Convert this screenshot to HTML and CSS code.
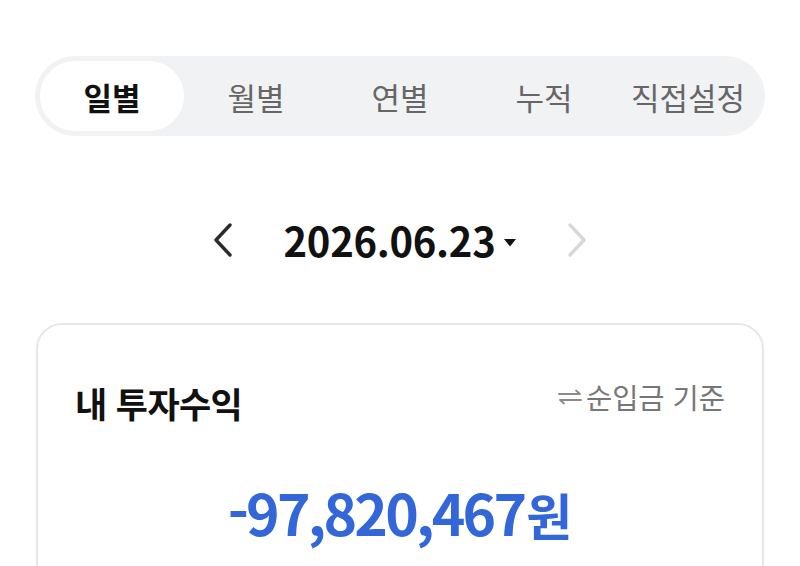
FILE: index.html
```html
<!DOCTYPE html>
<html lang="ko">
<head>
<meta charset="utf-8">
<link rel="stylesheet" href="styles.css">
</head>
<body>
<div class="page">
  <div class="tabs">
    <div class="tab active">일별</div>
    <div class="tab">월별</div>
    <div class="tab">연별</div>
    <div class="tab">누적</div>
    <div class="tab">직접설정</div>
  </div>

  <div class="date-row">
    <svg class="chev" width="22" height="36" viewBox="0 0 22 36"><polyline points="18,3 4,18 18,33" fill="none" stroke="#2b2b2b" stroke-width="3.4" stroke-linecap="round" stroke-linejoin="round"/></svg>
    <div class="date">
      <span class="date-text">2026.06.23</span>
      <svg class="caret" width="12" height="9" viewBox="0 0 12 9"><polygon points="0,1 12,1 6,8.5" fill="#111"/></svg>
    </div>
    <svg class="chev" width="22" height="36" viewBox="0 0 22 36"><polyline points="4,3 18,18 4,33" fill="none" stroke="#d8d8d8" stroke-width="3.4" stroke-linecap="round" stroke-linejoin="round"/></svg>
  </div>

  <div class="card">
    <div class="card-head">
      <div class="title">내 투자수익</div>
      <div class="basis">
        <svg class="swap" width="26" height="16" viewBox="0 0 26 16"><g fill="none" stroke="#8a8a8a" stroke-width="1.8" stroke-linecap="round" stroke-linejoin="round"><polyline points="2,5 23,5 19,1.5"/><polyline points="24,11 3,11 7,14.5"/></g></svg>
        <span>순입금 기준</span>
      </div>
    </div>
    <div class="amount"><span class="num">-97,820,467</span><span class="won">원</span></div>
  </div>
</div>
</body>
</html>
```

FILE: styles.css
```css
html, body {
  margin: 0;
  padding: 0;
  background: #ffffff;
}
body {
  font-family: "Noto Sans CJK KR", "Noto Sans", sans-serif;
  color: #111;
}
.page {
  padding: 56px 35px 0 35px;
}
.tabs {
  display: grid;
  grid-template-columns: repeat(5, 1fr);
  height: 80px;
  padding: 5px;
  box-sizing: border-box;
  background: #f1f2f4;
  border-radius: 40px;
}
.tab {
  display: flex;
  align-items: center;
  justify-content: center;
  font-size: 31px;
  color: #666;
  border-radius: 36px;
  line-height: 1;
}
.tab.active {
  background: #ffffff;
  color: #111;
  font-weight: 700;
}
.date-row {
  margin-top: 70px;
  height: 68px;
  display: flex;
  align-items: center;
  justify-content: center;
}
.date {
  display: flex;
  align-items: center;
  margin: 0 50px 0 50px;
}
.date-text {
  font-size: 40px;
  font-weight: 700;
  line-height: 1;
  color: #111;
  letter-spacing: -0.3px;
}
.caret {
  margin-left: 9px;
  margin-top: 4px;
}
.card {
  margin-top: 49px;
  margin-left: 1px;
  margin-right: 1px;
  border: 2px solid #e7e7e9;
  border-radius: 26px;
  padding: 58px 37px 60px 37px;
  height: 400px;
}
.card-head {
  display: flex;
  justify-content: space-between;
  align-items: center;
  height: 40px;
}
.title {
  font-size: 35px;
  font-weight: 700;
  line-height: 40px;
  color: #111;
  letter-spacing: -0.6px;
}
.basis {
  display: flex;
  align-items: center;
  font-size: 28.5px;
  color: #777;
  line-height: 1;
  margin-top: -12px;
}
.swap {
  margin-right: 3px;
}
.amount {
  margin-top: 53px;
  text-align: center;
  color: #3367d9;
  font-weight: 700;
  line-height: 70px;
}
.num {
  font-size: 57px;
  letter-spacing: -2.8px;
}
.won {
  font-size: 50px;
  margin-left: 2px;
}
```
